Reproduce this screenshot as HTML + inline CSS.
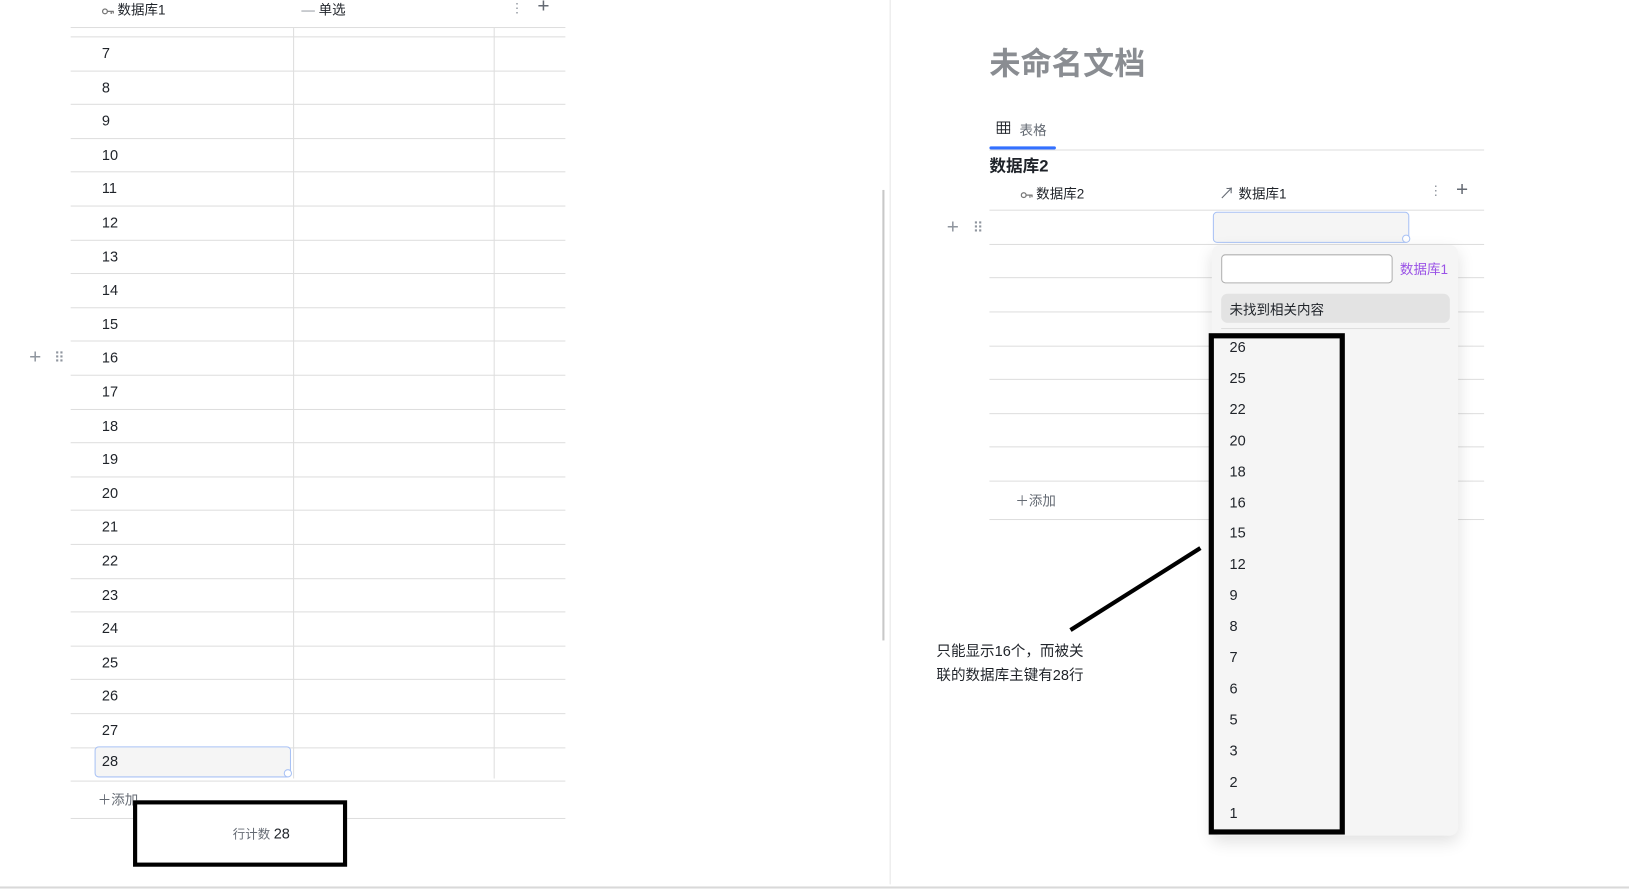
<!DOCTYPE html>
<html><head><meta charset="utf-8"><style>
html,body{margin:0;padding:0;background:#fff;width:1629px;height:890px;overflow:hidden}
#w{position:absolute;left:0;top:0;width:1570px;height:858px;transform:scale(1.0393,1.0380);transform-origin:0 0;font-family:"Liberation Sans","Noto Sans CJK SC",sans-serif;color:#1f2329}
.a{position:absolute;white-space:nowrap}
.h{position:absolute;height:1px;background:#dedede}
.v{position:absolute;width:1px;background:#dedede}
.n{position:absolute;font-size:14px;line-height:16px}
.g{color:#8f959e}
.k{display:inline-block;vertical-align:middle;margin-right:3px}
</style></head><body><div id="w">
<div class="a" style="left:98px;top:-1px;font-size:13px"><svg class="k" width="12" height="8" viewBox="0 0 12 8"><circle cx="3" cy="4" r="2.3" fill="none" stroke="#777" stroke-width="1.2"/><path d="M5.3 4H11.5M9 4v2.5M11 4v2" stroke="#777" stroke-width="1.2" fill="none"/></svg>数据库1</div>
<div class="a" style="left:290px;top:-1px;font-size:13px"><span class="g">—</span> 单选</div>
<div class="a g" style="left:491px;top:0px;font-size:13px">⋮</div>
<div class="a" style="left:517px;top:-5px;font-size:20px;color:#646a73">+</div>
<div class="h" style="left:68px;top:26px;width:476px"></div>
<div class="h" style="left:68px;top:35px;width:476px"></div>
<div class="v" style="left:282px;top:26px;height:724px"></div>
<div class="v" style="left:475px;top:26px;height:724px"></div>
<div id="rows"></div>
<div class="a" style="left:91px;top:719px;width:187px;height:28px;border:1.5px solid #a9c2f5;border-radius:4px;background:#f5f5f5"></div>
<div class="a" style="left:273px;top:741px;width:6px;height:6px;border:1.5px solid #a9c2f5;border-radius:50%;background:#fff"></div>
<div class="n" style="left:98px;top:725px">28</div>
<div class="a" style="left:94px;top:760px;font-size:13px;color:#646a73">＋添加</div>
<div class="h" style="left:68px;top:788px;width:476px"></div>
<div class="a" style="left:128px;top:771px;width:198px;height:56px;border:4px solid #000;background:#fff"></div>
<div class="a" style="left:224px;top:795px;font-size:12px;color:#646a73">行计数 <span style="font-size:14px;color:#1f2329">28</span></div>
<div class="a" style="left:28px;top:333px;font-size:20px;color:#8f959e">+</div>
<div class="a" style="left:52px;top:336px;font-size:14px;color:#8f959e;letter-spacing:-2px">⠿</div>
<div class="a" style="left:849px;top:183px;width:2px;height:434px;background:#c8c8c8"></div>
<div class="v" style="left:856px;top:0;height:852px;background:#e6e6e6"></div>
<div class="h" style="left:0;top:854px;width:1570px;background:#d9d9d9;height:2px"></div>
<div class="a" style="left:952px;top:37px;font-size:30px;font-weight:bold;color:#8a8d92">未命名文档</div>
<svg class="a" style="left:959px;top:117px" width="13" height="12" viewBox="0 0 13 12"><rect x="0.5" y="0.5" width="12" height="11" fill="none" stroke="#1f2329"/><path d="M0 4h13M0 8h13M4.5 0v12M8.5 0v12" stroke="#1f2329"/></svg>
<div class="a" style="left:981px;top:115px;font-size:13px;color:#646a73">表格</div>
<div class="a" style="left:952px;top:141px;width:64px;height:3px;background:#3370ff;border-radius:2px"></div>
<div class="h" style="left:952px;top:144px;width:476px"></div>
<div class="a" style="left:952px;top:146px;font-size:16px;font-weight:bold">数据库2</div>
<div class="a" style="left:982px;top:176px;font-size:13px"><svg class="k" width="12" height="8" viewBox="0 0 12 8"><circle cx="3" cy="4" r="2.3" fill="none" stroke="#777" stroke-width="1.2"/><path d="M5.3 4H11.5M9 4v2.5M11 4v2" stroke="#777" stroke-width="1.2" fill="none"/></svg>数据库2</div>
<div class="a" style="left:1173px;top:175px;font-size:13px"><span style="color:#646a73;font-size:15px">↗</span> 数据库1</div>
<div class="a g" style="left:1375px;top:176px;font-size:13px">⋮</div>
<div class="a" style="left:1401px;top:172px;font-size:20px;color:#646a73">+</div>
<div class="h" style="left:952px;top:202px;width:476px"></div>
<div id="rrows"></div>
<div class="a" style="left:911px;top:208px;font-size:20px;color:#8f959e">+</div>
<div class="a" style="left:936px;top:211px;font-size:14px;color:#8f959e;letter-spacing:-2px">⠿</div>
<div class="a" style="left:977px;top:472px;font-size:13px;color:#646a73">＋添加</div>
<div class="a" style="left:1167px;top:204px;width:187px;height:28px;border:1.5px solid #a9c2f5;border-radius:4px;background:#f5f5f5"></div>
<div class="a" style="left:1349px;top:226px;width:6px;height:6px;border:1.5px solid #a9c2f5;border-radius:50%;background:#fff"></div>
<div class="a" style="left:1166px;top:236px;width:237px;height:569px;background:#f5f5f5;border-radius:8px;box-shadow:0 6px 16px rgba(0,0,0,0.12)"></div>
<div class="a" style="left:1175px;top:245px;width:163px;height:26px;background:#fff;border:1px solid #b0b0b0;border-radius:4px"></div>
<div class="a" style="left:1347px;top:249px;font-size:13px;color:#9a52e6">数据库1</div>
<div class="a" style="left:1175px;top:283px;width:220px;height:28px;background:#e3e3e3;border-radius:6px"></div>
<div class="a" style="left:1183px;top:288px;font-size:13px">未找到相关内容</div>
<div class="h" style="left:1175px;top:316px;width:220px"></div>
<div id="items"></div>
<div class="a" style="left:1163px;top:321px;width:121px;height:473px;border:5px solid #000"></div>
<svg class="a" style="left:1020px;top:520px" width="145" height="95"><line x1="10" y1="87" x2="135" y2="8" stroke="#000" stroke-width="4"/></svg>
<div class="a" style="left:901px;top:616px;font-size:14px;line-height:23px">只能显示16个，而被关<br>联的数据库主键有28行</div>
</div>
<script>
var r=document.getElementById('rows'),h='';
for(var i=0;i<22;i++){var y=35+i*32.6;h+='<div class="h" style="left:68px;top:'+(y+32.6).toFixed(1)+'px;width:476px"></div>';if(i<21)h+='<div class="n" style="left:98px;top:'+(y+8).toFixed(1)+'px">'+(i+7)+'</div>';}
r.innerHTML=h;
var rr=document.getElementById('rrows');h='';
[235,267,300,333,365,398,430,463,500].forEach(function(y){h+='<div class="h" style="left:952px;top:'+y+'px;width:476px"></div>'});
rr.innerHTML=h;
var it=document.getElementById('items');h='';
[26,25,22,20,18,16,15,12,9,8,7,6,5,3,2,1].forEach(function(n,i){h+='<div class="n" style="left:1183px;top:'+(326+i*29.9).toFixed(1)+'px">'+n+'</div>'});
it.innerHTML=h;
</script>
</body></html>
